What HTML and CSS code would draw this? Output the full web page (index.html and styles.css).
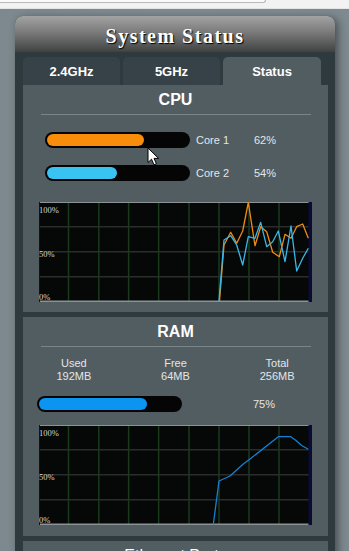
FILE: index.html
```html
<!DOCTYPE html>
<html>
<head>
<meta charset="utf-8">
<link rel="stylesheet" href="styles.css">
</head>
<body>
<div class="topbar"><div class="urlbox"></div></div>
<div class="panel">
  <div class="header">System Status</div>
  <div class="tabs">
    <div class="tab">2.4GHz</div>
    <div class="tab">5GHz</div>
    <div class="tab active">Status</div>
  </div>

  <div class="section cpu">
    <div class="title">CPU</div>
    <div class="sep"></div>
    <div class="core-row">
      <div class="bar"><div class="fill orange" style="width:97px"></div></div>
      <span class="core-label">Core 1</span><span class="pct">62%</span>
    </div>
    <div class="core-row">
      <div class="bar"><div class="fill cyan" style="width:70px"></div></div>
      <span class="core-label">Core 2</span><span class="pct">54%</span>
    </div>
    <svg class="chart chart-cpu" width="273" height="100" viewBox="0 0 273 100">
      <rect x="0" y="0" width="273" height="100" fill="#050806"/>
      <g stroke="#1a3a1c" stroke-width="1.5">
        <line x1="29.5" y1="0" x2="29.5" y2="100"/>
        <line x1="59.8" y1="0" x2="59.8" y2="100"/>
        <line x1="89.6" y1="0" x2="89.6" y2="100"/>
        <line x1="119.6" y1="0" x2="119.6" y2="100"/>
        <line x1="150" y1="0" x2="150" y2="100"/>
        <line x1="180" y1="0" x2="180" y2="100"/>
        <line x1="210" y1="0" x2="210" y2="100"/>
        <line x1="240" y1="0" x2="240" y2="100"/>
      </g>
      <g stroke="#2b2d2c" stroke-width="1.5">
        <line x1="0" y1="24.8" x2="270" y2="24.8"/>
        <line x1="0" y1="49.8" x2="270" y2="49.8"/>
        <line x1="0" y1="74.8" x2="270" y2="74.8"/>
      </g>
      <line x1="0" y1="0.5" x2="270" y2="0.5" stroke="#8e9296" stroke-width="1"/>
      <line x1="0" y1="99.2" x2="270" y2="99.2" stroke="#8e9296" stroke-width="1.6"/>
      <line x1="0.5" y1="0" x2="0.5" y2="100" stroke="#0d0d3a" stroke-width="1"/>
      <rect x="269.5" y="0" width="3.5" height="100" fill="#0b0b36"/>
      <polyline fill="none" stroke="#ef8b12" stroke-width="1.3" stroke-linejoin="round"
        points="180.5,99 185,43 191.7,30.3 197.7,41.3 203.7,29 209.3,0.5 216,43.7 221.7,24.7 227.7,29.7 233.7,50.3 240.3,54.7 246,32.3 252,36.3 257.7,24.7 263.7,22 269.3,36.3"/>
      <polyline fill="none" stroke="#3bb7e6" stroke-width="1.3" stroke-linejoin="round"
        points="180,99 185,38 191.7,33.7 197.7,43 203.7,63 209.3,34.7 216,36.3 221.7,20.3 227.7,44.7 233.7,39.7 239.3,29 246,59.7 252,24 257.7,69 263.7,56.3 269.3,46.3"/>
      <g class="axis">
        <text x="0" y="10.5">100%</text>
        <text x="0" y="54.7">50%</text>
        <text x="0" y="97.5">0%</text>
      </g>
    </svg>
  </div>

  <div class="section ram">
    <div class="title">RAM</div>
    <div class="sep"></div>
    <div class="stats">
      <div class="stat"><div>Used</div><div>192MB</div></div>
      <div class="stat"><div>Free</div><div>64MB</div></div>
      <div class="stat"><div>Total</div><div>256MB</div></div>
    </div>
    <div class="ram-row">
      <div class="bar"><div class="fill blue" style="width:108px"></div></div>
      <span class="ram-pct">75%</span>
    </div>
    <svg class="chart chart-ram" width="273" height="100" viewBox="0 0 273 100">
      <rect x="0" y="0" width="273" height="100" fill="#050806"/>
      <g stroke="#1a3a1c" stroke-width="1.5">
        <line x1="29.5" y1="0" x2="29.5" y2="100"/>
        <line x1="59.8" y1="0" x2="59.8" y2="100"/>
        <line x1="89.6" y1="0" x2="89.6" y2="100"/>
        <line x1="119.6" y1="0" x2="119.6" y2="100"/>
        <line x1="150" y1="0" x2="150" y2="100"/>
        <line x1="180" y1="0" x2="180" y2="100"/>
        <line x1="210" y1="0" x2="210" y2="100"/>
        <line x1="240" y1="0" x2="240" y2="100"/>
      </g>
      <g stroke="#2b2d2c" stroke-width="1.5">
        <line x1="0" y1="24.8" x2="270" y2="24.8"/>
        <line x1="0" y1="49.8" x2="270" y2="49.8"/>
        <line x1="0" y1="74.8" x2="270" y2="74.8"/>
      </g>
      <line x1="0" y1="0.5" x2="270" y2="0.5" stroke="#8e9296" stroke-width="1"/>
      <line x1="0" y1="99.2" x2="270" y2="99.2" stroke="#8e9296" stroke-width="1.6"/>
      <line x1="0.5" y1="0" x2="0.5" y2="100" stroke="#0d0d3a" stroke-width="1"/>
      <rect x="269.5" y="0" width="3.5" height="100" fill="#0b0b36"/>
      <polyline fill="none" stroke="#1580d2" stroke-width="1.3" stroke-linejoin="round"
        points="174.3,99.5 180,56 191,51 204.3,39 211,34 239.3,11.7 251.7,11.7 257,15.5 262.7,20.5 269.3,24.3"/>
      <g class="axis">
        <text x="0" y="10.5">100%</text>
        <text x="0" y="54.7">50%</text>
        <text x="0" y="97.5">0%</text>
      </g>
    </svg>
  </div>

  <div class="section eth">
    <div class="title light">Ethernet Ports</div>
  </div>
</div>

<svg class="cursor" width="13" height="20" viewBox="0 0 13 20">
  <path d="M1,1 L1,15.5 L4.5,12.2 L7,17.8 L9.4,16.8 L7,11.4 L11.6,11.4 Z" fill="#ffffff" stroke="#000000" stroke-width="1" stroke-linejoin="miter"/>
</svg>
</body>
</html>
```

FILE: styles.css
```css
html, body {
  margin: 0;
  padding: 0;
}

body {
  width: 349px;
  height: 551px;
  overflow: hidden;
  position: relative;
  background: linear-gradient(90deg, #7d898e 0%, #808c91 50%, #7e8a8f 100%);
  font-family: "Liberation Sans", Arial, sans-serif;
}

.topbar {
  height: 8px;
  background: #f2f2f2;
  border-bottom: 1px solid #e2e4e5;
}

.urlbox {
  width: 265px;
  height: 2px;
  background: #fafafa;
  border-right: 1px solid #b9b9b9;
  border-bottom: 1px solid #b9b9b9;
  border-radius: 0 0 4px 0;
}

.panel {
  margin: 7px 0 0 15px;
  width: 320px;
  height: 560px;
  background: #2f3a3f;
  border-radius: 8px 8px 0 0;
  box-shadow: 3px 2px 9px rgba(0, 0, 0, 0.45);
}

.header {
  height: 36px;
  box-sizing: border-box;
  padding-top: 4px;
  line-height: 32px;
  text-align: center;
  border-radius: 8px 8px 0 0;
  background: linear-gradient(180deg, #a3a3a3 0%, #7a7a7a 45%, #404242 100%);
  color: #ffffff;
  font-family: "Liberation Serif", "Times New Roman", serif;
  font-weight: bold;
  font-size: 20px;
  letter-spacing: 1.5px;
  text-shadow: 1px 1px 1px #000000;
}

.tabs {
  display: grid;
  grid-template-columns: 97px 97px 98px;
  column-gap: 3px;
  padding: 5px 7px 0 8px;
}

.tab {
  height: 28px;
  box-sizing: border-box;
  padding-top: 2px;
  line-height: 26px;
  text-align: center;
  border-radius: 5px 5px 0 0;
  background: #364247;
  color: #ffffff;
  font-weight: bold;
  font-size: 13px;
}

.tab.active {
  background: #525d62;
}

.section {
  margin: 0 7px 5px 8px;
  background: #525d62;
  padding-top: 5px;
  padding-bottom: 10px;
}

.section.ram {
  padding-bottom: 11px;
}

.section.eth {
  height: 80px;
}

.title {
  height: 20px;
  line-height: 20px;
  text-align: center;
  color: #ffffff;
  font-weight: bold;
  font-size: 16px;
}

.title.light {
  font-weight: normal;
}

.sep {
  margin: 4px 17px 0 18px;
  height: 1px;
  background: #7b868b;
}

.core-row {
  display: flex;
  align-items: center;
  height: 16px;
  margin-top: 17px;
  padding-left: 22px;
}

.bar {
  width: 145px;
  height: 16px;
  box-sizing: border-box;
  padding: 2px;
  border-radius: 8px;
  background: #050505;
  flex: none;
}

.fill {
  height: 12px;
  border-radius: 6px;
}

.fill.orange { background: #f78d0b; }
.fill.cyan { background: #38c3f3; }
.fill.blue { background: #0b95f1; }

.core-label {
  margin-left: 6px;
  width: 58px;
  font-size: 11px;
  color: #e3e6e8;
}

.pct, .ram-pct {
  font-size: 11px;
  color: #e3e6e8;
}

.stats {
  display: grid;
  grid-template-columns: 1fr 1fr 1fr;
  margin-top: 10px;
  text-align: center;
  font-size: 11px;
  line-height: 13px;
  color: #e3e6e8;
}

.ram-row {
  display: flex;
  align-items: center;
  height: 16px;
  margin-top: 13px;
  padding-left: 14px;
}

.ram-pct {
  margin-left: 71px;
}

.chart {
  display: block;
  margin: 21px auto 0;
  width: 273px;
  height: 100px;
}

.chart-ram {
  margin-top: 13px;
}

.axis text {
  font-family: "Liberation Serif", "Times New Roman", serif;
  font-size: 8.5px;
  fill: #d6d6d6;
}

.cursor {
  position: absolute;
  left: 147px;
  top: 147px;
}
```
